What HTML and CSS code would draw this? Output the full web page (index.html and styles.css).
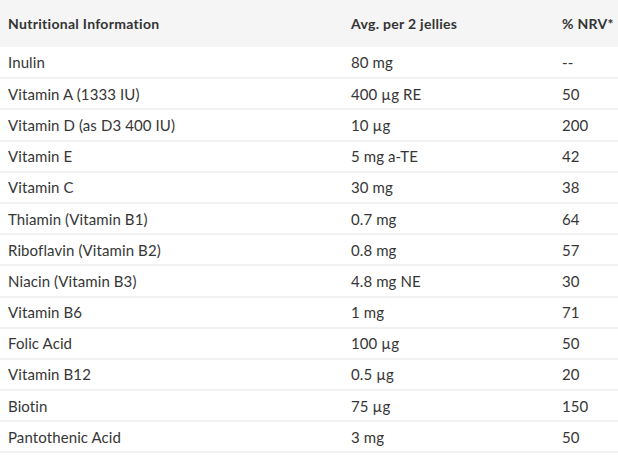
FILE: index.html
```html
<!DOCTYPE html>
<html lang="en">
<head>
<meta charset="utf-8">
<title>Nutritional Information</title>
<link rel="stylesheet" href="styles.css">
</head>
<body>
<table class="nutrition">
  <colgroup>
    <col class="col-name">
    <col class="col-amount">
    <col class="col-nrv">
  </colgroup>
  <thead>
    <tr>
      <th>Nutritional Information</th>
      <th>Avg. per 2 jellies</th>
      <th>% NRV*</th>
    </tr>
  </thead>
  <tbody>
    <tr><td>Inulin</td><td>80 mg</td><td>--</td></tr>
    <tr><td>Vitamin A (1333 IU)</td><td>400 µg RE</td><td>50</td></tr>
    <tr><td>Vitamin D (as D3 400 IU)</td><td>10 µg</td><td>200</td></tr>
    <tr><td>Vitamin E</td><td>5 mg a-TE</td><td>42</td></tr>
    <tr><td>Vitamin C</td><td>30 mg</td><td>38</td></tr>
    <tr><td>Thiamin (Vitamin B1)</td><td>0.7 mg</td><td>64</td></tr>
    <tr><td>Riboflavin (Vitamin B2)</td><td>0.8 mg</td><td>57</td></tr>
    <tr><td>Niacin (Vitamin B3)</td><td>4.8 mg NE</td><td>30</td></tr>
    <tr><td>Vitamin B6</td><td>1 mg</td><td>71</td></tr>
    <tr><td>Folic Acid</td><td>100 µg</td><td>50</td></tr>
    <tr><td>Vitamin B12</td><td>0.5 µg</td><td>20</td></tr>
    <tr><td>Biotin</td><td>75 µg</td><td>150</td></tr>
    <tr><td>Pantothenic Acid</td><td>3 mg</td><td>50</td></tr>
  </tbody>
</table>
</body>
</html>
```
FILE: styles.css
```css
html, body {
  margin: 0;
  padding: 0;
  background: #ffffff;
}

body {
  font-family: "Lato", "Liberation Sans", sans-serif;
  color: #363636;
}

.nutrition {
  width: 618px;
  border-collapse: collapse;
  table-layout: fixed;
}

.col-name { width: 343px; }
.col-amount { width: 211px; }
.col-nrv { width: 64px; }

.nutrition th {
  background: #f5f5f5;
  height: 47px;
  padding: 0 0 0 8px;
  text-align: left;
  font-size: 14px;
  letter-spacing: 0.3px;
  font-weight: 700;
  color: #333333;
  vertical-align: middle;
  white-space: nowrap;
}

.nutrition td {
  height: 31.2px;
  padding: 0 0 0 8px;
  font-size: 15px;
  letter-spacing: 0.1px;
  border-bottom: 2px solid #f2f2f2;
  vertical-align: middle;
  box-sizing: border-box;
  white-space: nowrap;
}
```
